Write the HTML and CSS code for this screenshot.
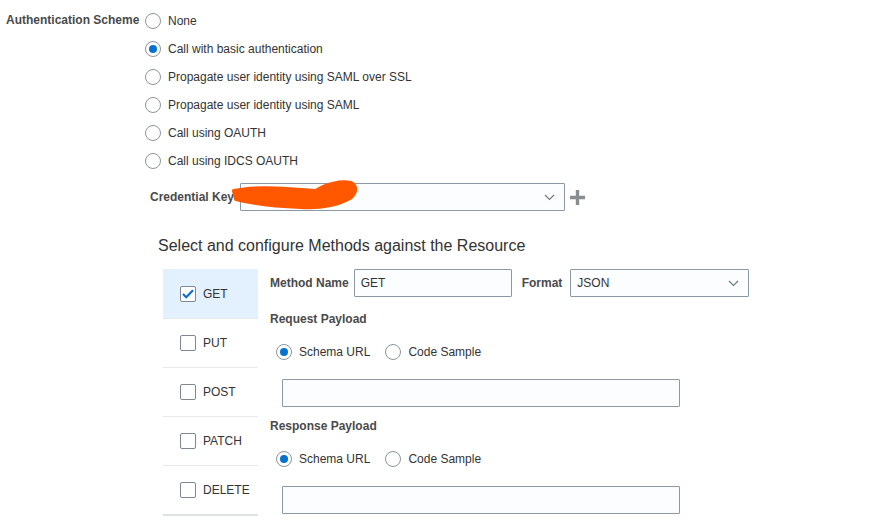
FILE: index.html
```html
<!DOCTYPE html>
<html>
<head>
    <meta charset="UTF-8">
    <title>Authentication and Methods</title>
    <link rel="stylesheet" href="styles.css">
</head>
<body>
<div class="page">
    <div class="auth">
        <div class="auth-label">Authentication Scheme</div>
        <div class="radio-list">
            <div class="opt"><span class="radio"></span>None</div>
            <div class="opt"><span class="radio on"></span>Call with basic authentication</div>
            <div class="opt"><span class="radio"></span>Propagate user identity using SAML over SSL</div>
            <div class="opt"><span class="radio"></span>Propagate user identity using SAML</div>
            <div class="opt"><span class="radio"></span>Call using OAUTH</div>
            <div class="opt"><span class="radio"></span>Call using IDCS OAUTH</div>
        </div>
    </div>

    <div class="cred">
        <div class="cred-label">Credential Key</div>
        <div class="select cred-select">
            <span class="select-val">AC</span>
            <svg class="chev" width="11" height="7" viewBox="0 0 11 7"><path d="M1 1l4.5 4.5L10 1" fill="none" stroke="#6d7780" stroke-width="1.1"/></svg>
        </div>
        <svg class="plus" width="17" height="17" viewBox="0 0 17 17"><path d="M8.5 1v15M1 8.5h15" stroke="#8a8d90" stroke-width="3.4"/></svg>
        <!-- redaction scribble -->
        <svg class="scribble" width="140" height="34" viewBox="0 0 140 34">
            <path d="M8 12 C 30 7, 60 10, 90 12 C 100 5, 115 2, 125 4 C 132 8, 130 17, 120 21 C 110 26, 95 29, 75 28 C 50 27, 25 24, 10 20 Z" fill="#ff5800" stroke="#ff5800" stroke-width="4" stroke-linejoin="round"/>
        </svg>
    </div>

    <h2 class="title">Select and configure Methods against the Resource</h2>

    <div class="methods">
        <ul class="method-list">
            <li class="active"><span class="check on"><svg width="12" height="10" viewBox="0 0 12 10"><path d="M1 5l3.2 3.2L11 1.2" fill="none" stroke="#0a70d0" stroke-width="2.2"/></svg></span>GET</li>
            <li><span class="check"></span>PUT</li>
            <li><span class="check"></span>POST</li>
            <li><span class="check"></span>PATCH</li>
            <li><span class="check"></span>DELETE</li>
        </ul>

        <div class="config">
            <div class="row">
                <span class="b-label">Method Name</span>
                <div class="input name-input">GET</div>
                <span class="b-label fmt-label">Format</span>
                <div class="select fmt-select">
                    <span class="select-val">JSON</span>
                    <svg class="chev" width="11" height="7" viewBox="0 0 11 7"><path d="M1 1l4.5 4.5L10 1" fill="none" stroke="#6d7780" stroke-width="1.1"/></svg>
                </div>
            </div>

            <div class="b-label sec req">Request Payload</div>
            <div class="pick">
                <div class="opt"><span class="radio on"></span>Schema URL</div>
                <div class="opt"><span class="radio"></span>Code Sample</div>
            </div>
            <div class="input wide"></div>

            <div class="b-label sec">Response Payload</div>
            <div class="pick">
                <div class="opt"><span class="radio on"></span>Schema URL</div>
                <div class="opt"><span class="radio"></span>Code Sample</div>
            </div>
            <div class="input wide"></div>
        </div>
    </div>
</div>
</body>
</html>
```

FILE: styles.css
```css
body, div, ul, li, h2, span {
    margin: 0;
    padding: 0;
}

body {
    font-family: "Liberation Sans", Arial, sans-serif;
    font-size: 12px;
    color: #333;
    background: #fff;
}

ul, li {
    list-style: none;
}

.page {
    padding-top: 7px;
}

/* auth scheme */
.auth {
    display: flex;
    padding-left: 6px;
}

.auth-label {
    font-weight: bold;
    color: #4a4a4a;
    line-height: 28px;
    margin-top: -1px;
    width: 139px;
}

.opt {
    display: flex;
    align-items: center;
    height: 28px;
}

.radio {
    display: flex;
    align-items: center;
    justify-content: center;
    box-sizing: border-box;
    width: 16px;
    height: 16px;
    margin-right: 7px;
    border: 1px solid #8a949e;
    border-radius: 50%;
    background: #fff;
}

.radio.on::after {
    content: "";
    width: 8px;
    height: 8px;
    border-radius: 50%;
    background: #0572ce;
}

/* credential */
.cred {
    position: relative;
    display: flex;
    align-items: center;
    margin-top: 8px;
    padding-left: 150px;
}

.cred-label {
    font-weight: bold;
    color: #4a4a4a;
    width: 90px;
}

.select, .input {
    box-sizing: border-box;
    display: flex;
    align-items: center;
    height: 28px;
    padding: 0 6px;
    border: 1px solid #8c98a3;
    border-radius: 1px;
    background: #fcfdfe;
    color: #333;
}

.select-val {
    flex: 1;
}

.chev {
    margin-right: 3px;
}

.cred-select {
    width: 325px;
}

.plus {
    margin-left: 4px;
}

.scribble {
    position: absolute;
    left: 226px;
    top: -4px;
}

/* title */
.title {
    margin: 25px 0 0 158px;
    font-size: 16px;
    font-weight: normal;
    line-height: 20px;
    color: #333;
}

/* methods */
.methods {
    display: flex;
    margin: 13px 0 0 163px;
}

.method-list {
    width: 95px;
    border-bottom: 2px solid #dfe2e5;
}

.method-list li {
    display: flex;
    align-items: center;
    height: 49px;
    padding-left: 17px;
    box-sizing: border-box;
    border-top: 1px solid #e8e8e8;
}

.method-list li:first-child {
    border-top: none;
}

.method-list li.active {
    background: #e3f0fd;
}

.check {
    display: flex;
    align-items: center;
    justify-content: center;
    box-sizing: border-box;
    width: 16px;
    height: 16px;
    margin-right: 7px;
    border: 1px solid #7d8893;
    border-radius: 2px;
    background: #fff;
}

.config {
    padding-left: 12px;
}

.row {
    display: flex;
    align-items: center;
}

.b-label {
    font-weight: bold;
    color: #4a4a4a;
}

.name-input {
    width: 158px;
    margin-left: 5px;
}

.fmt-label {
    margin-left: 10px;
}

.fmt-select {
    width: 179px;
    margin-left: 8px;
}

.sec {
    margin-top: 11px;
    line-height: 16px;
}

.sec.req {
    margin-top: 14px;
}

.pick {
    display: flex;
    margin: 11px 0 0 6px;
}

.pick .opt {
    margin-right: 15px;
}

.wide {
    width: 398px;
    margin: 13px 0 0 12px;
}
```
